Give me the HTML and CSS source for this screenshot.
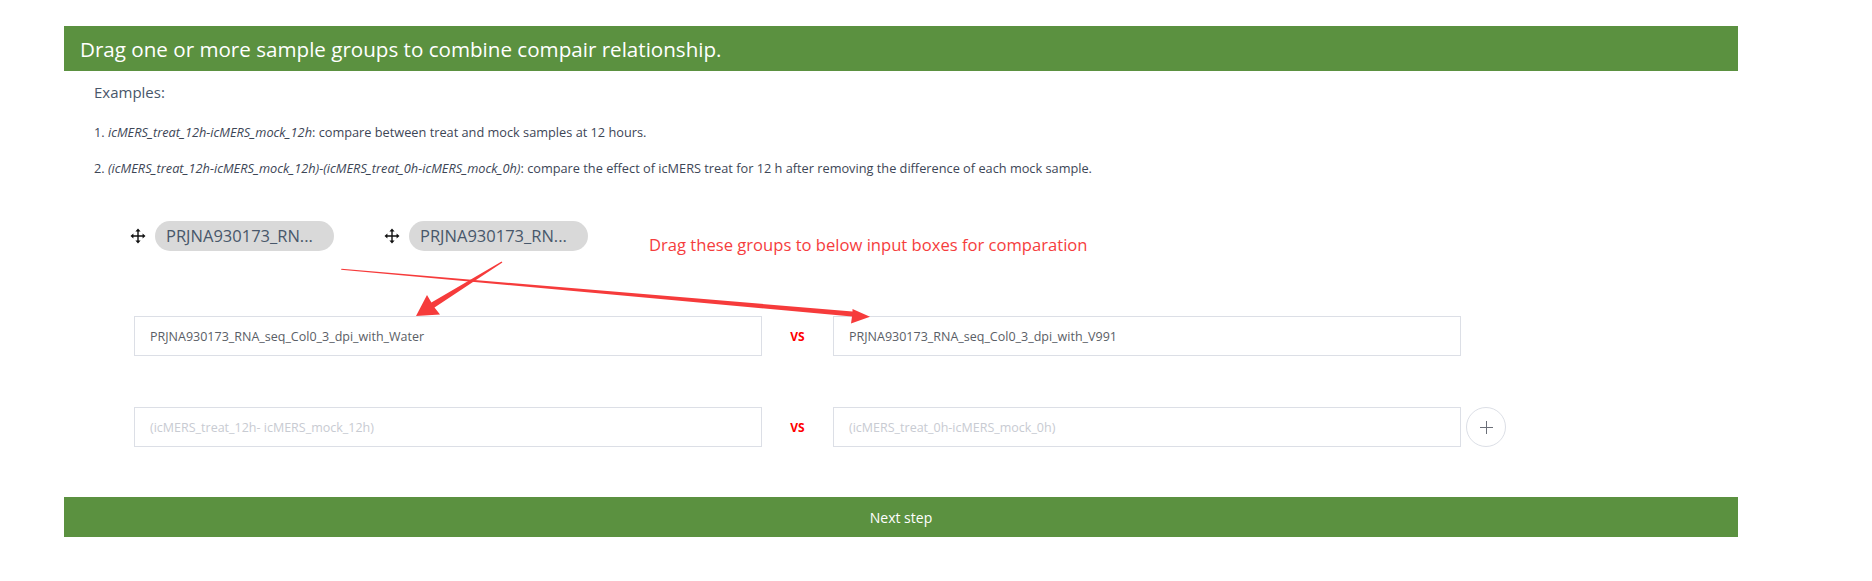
FILE: index.html
```html
<!DOCTYPE html>
<html>
<head>
<meta charset="utf-8">
<link rel="stylesheet" href="styles.css">
</head>
<body>
<div class="page">
  <div class="header">Drag one or more sample groups to combine compair relationship.</div>
  <div class="examples">
    <div class="ex-title">Examples:</div>
    <p class="ex-line">1. <i>icMERS_treat_12h-icMERS_mock_12h</i>: compare between treat and mock samples at 12 hours.</p>
    <p class="ex-line">2. <i>(icMERS_treat_12h-icMERS_mock_12h)-(icMERS_treat_0h-icMERS_mock_0h)</i>: compare the effect of icMERS treat for 12 h after removing the difference of each mock sample.</p>
  </div>
  <div class="groups">
    <div class="group">
      <svg class="move" viewBox="0 0 16 16" width="16" height="16"><path d="M8 2.5V13.5M2.5 8H13.5" stroke="#111" stroke-width="1.4" fill="none"/><path d="M8 0.5L10.6 3.4H5.4Z M8 15.5L10.6 12.6H5.4Z M0.5 8L3.4 5.4V10.6Z M15.5 8L12.6 5.4V10.6Z" fill="#111"/></svg>
      <span class="chip">PRJNA930173_RN...</span>
    </div>
    <div class="group">
      <svg class="move" viewBox="0 0 16 16" width="16" height="16"><path d="M8 2.5V13.5M2.5 8H13.5" stroke="#111" stroke-width="1.4" fill="none"/><path d="M8 0.5L10.6 3.4H5.4Z M8 15.5L10.6 12.6H5.4Z M0.5 8L3.4 5.4V10.6Z M15.5 8L12.6 5.4V10.6Z" fill="#111"/></svg>
      <span class="chip">PRJNA930173_RN...</span>
    </div>
    <div class="hint">Drag these groups to below input boxes for comparation</div>
  </div>
  <div class="compare-row">
    <div class="box filled">PRJNA930173_RNA_seq_Col0_3_dpi_with_Water</div>
    <div class="vs">VS</div>
    <div class="box filled">PRJNA930173_RNA_seq_Col0_3_dpi_with_V991</div>
  </div>
  <div class="compare-row">
    <div class="box empty">(icMERS_treat_12h- icMERS_mock_12h)</div>
    <div class="vs">VS</div>
    <div class="box empty">(icMERS_treat_0h-icMERS_mock_0h)</div>
    <div class="add"><span class="plus"></span></div>
  </div>
  <div class="next">Next step</div>
</div>
<svg class="annot" width="1872" height="581" viewBox="0 0 1872 581">
  <polygon fill="#f63b3b" points="341,269.8 852,316.5 851,323.5 870,316.7 852.5,309 852.5,311.5 341.5,268.8"/>
  <polygon fill="#f63b3b" points="502.4,262.4 434.5,307.5 440,314.5 416,316 427,295 431.4,302.4 501.6,261.4"/>
</svg>
</body>
</html>
```
FILE: styles.css
```css
body {
  margin: 0;
  background: #fff;
  font-family: "Open Sans", "Noto Sans", sans-serif;
}
.page {
  width: 1674px;
  padding: 26px 0 0 64px;
}
.header {
  height: 45px;
  background: #5b9140;
  color: #fff;
  font-size: 20.6px;
  display: flex;
  align-items: center;
  padding-left: 16px;
}
.examples {
  padding-left: 30px;
  color: #48576a;
}
.ex-title {
  font-size: 15px;
  margin-top: 10px;
  line-height: 22px;
}
.ex-line {
  margin: 0;
  font-size: 12.75px;
  line-height: 16px;
  color: #3d4656;
}
.ex-line:first-of-type { margin-top: 21px; }
.ex-line + .ex-line { margin-top: 20px; }
.groups {
  display: flex;
  align-items: flex-start;
  padding-left: 66px;
  margin-top: 45px;
}
.group {
  display: flex;
  align-items: center;
  gap: 9px;
  margin-right: 50px;
}
.move { flex: none; }
.chip {
  height: 30px;
  width: 179px;
  box-sizing: border-box;
  border-radius: 15px;
  background: #d9d9d9;
  color: #48576a;
  font-size: 16.5px;
  line-height: 30px;
  padding-left: 11px;
  white-space: nowrap;
}
.hint {
  color: #f53d3d;
  font-size: 16.6px;
  margin: 13px 0 0 11px;
  line-height: 22px;
}
.compare-row {
  display: flex;
  align-items: center;
  padding-left: 70px;
  margin-top: 60px;
}
.compare-row + .compare-row { margin-top: 51px; }
.box {
  width: 628px;
  height: 40px;
  box-sizing: border-box;
  border: 1px solid #dcdfe6;
  padding-left: 15px;
  display: flex;
  align-items: center;
  font-size: 12.5px;
  color: #5a5e66;
}
.box.empty { color: #c8cbd2; }
.vs {
  width: 71px;
  text-align: center;
  color: #ff0000;
  font-weight: bold;
  font-size: 12px;
}
.add {
  width: 40px;
  height: 40px;
  box-sizing: border-box;
  border: 1px solid #dcdfe6;
  border-radius: 50%;
  margin-left: 5px;
  display: flex;
  align-items: center;
  justify-content: center;
}
.plus {
  width: 13px;
  height: 13px;
  background:
    linear-gradient(#6b6f78, #6b6f78) center / 13px 1px no-repeat,
    linear-gradient(#6b6f78, #6b6f78) center / 1px 13px no-repeat;
}
.next {
  margin-top: 50px;
  height: 40px;
  background: #5b9140;
  color: #fff;
  font-size: 14px;
  display: flex;
  align-items: center;
  justify-content: center;
}
.annot {
  position: absolute;
  top: 0;
  left: 0;
  pointer-events: none;
}
```
